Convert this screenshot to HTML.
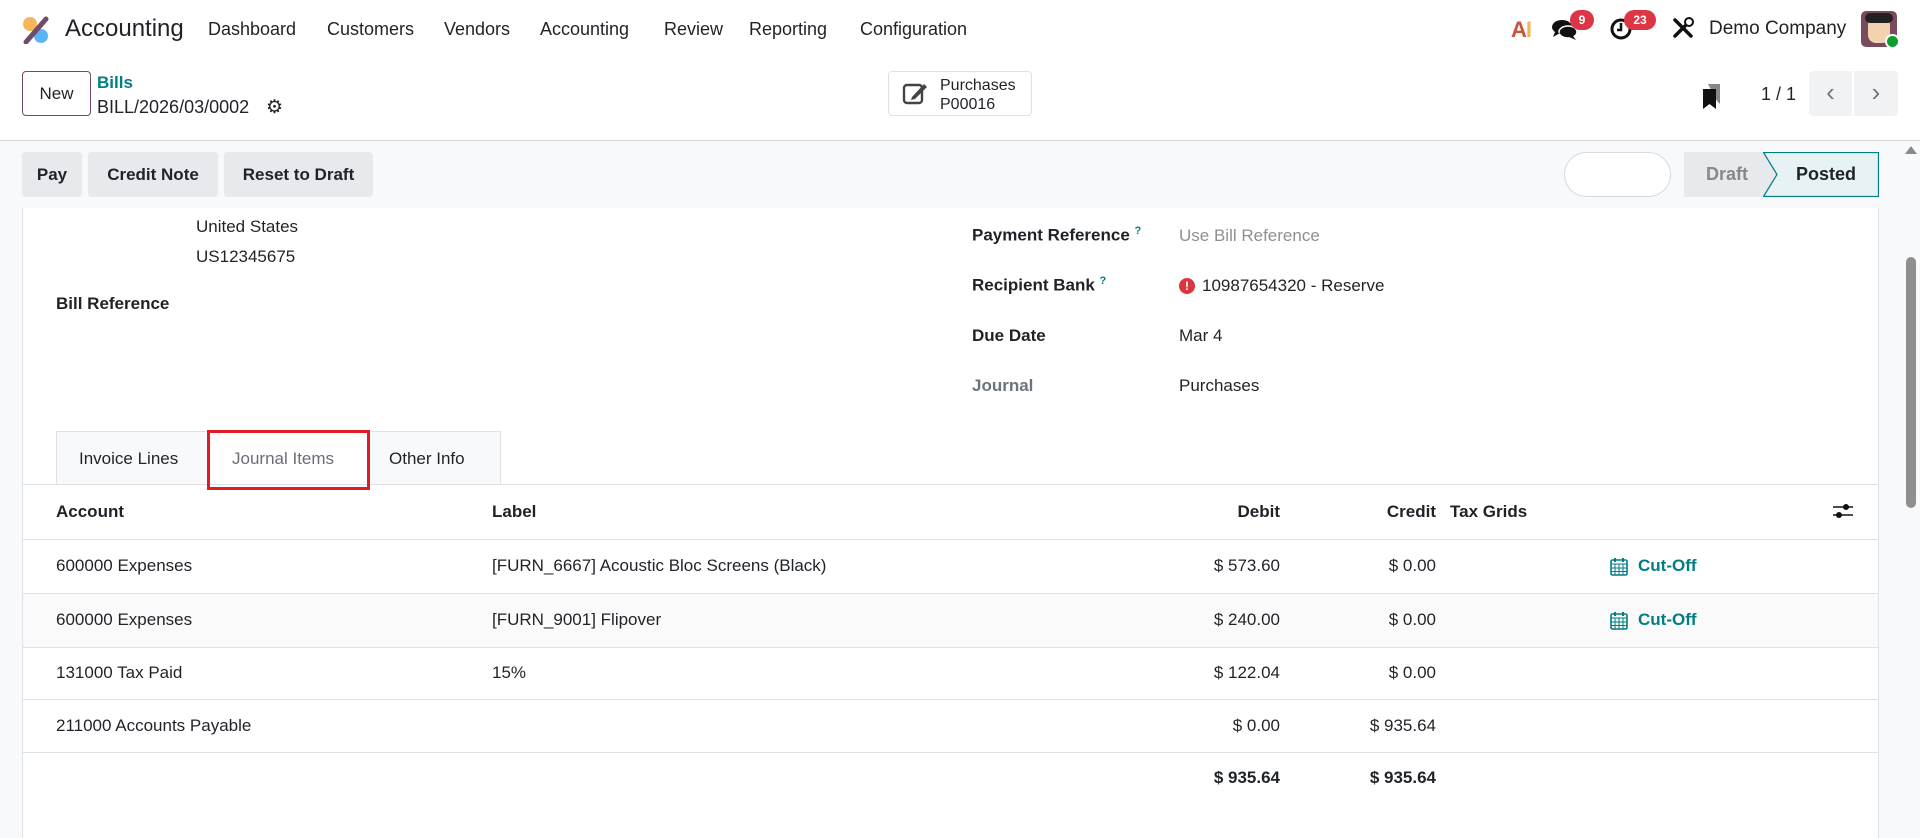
<!DOCTYPE html>
<html><head><meta charset="utf-8">
<style>
*{box-sizing:border-box;margin:0;padding:0}
body{width:1920px;height:838px;overflow:hidden;background:#fff;font-family:"Liberation Sans",sans-serif;font-size:17px;color:#1f2328;position:relative}
.a{position:absolute;white-space:nowrap}
.btn{position:absolute;background:#e7e9ed;border-radius:4px;font-weight:bold;color:#1f2328;display:flex;align-items:center;justify-content:center;font-size:17px}
.b{font-weight:bold}
.hl{position:absolute;left:22px;width:1856px;height:1px;background:#dee2e6}
.r{text-align:right}
.cut{color:#017e84;font-weight:bold}
.badge{position:absolute;background:#dc3545;color:#fff;font-size:12px;font-weight:bold;border-radius:10px;height:20px;line-height:20px;text-align:center}
</style></head><body>
<svg class="a" style="left:22px;top:16px" width="28" height="28" viewBox="0 0 28 28">
<circle cx="8" cy="8" r="7" fill="#f9b55a"/><circle cx="19" cy="20" r="7" fill="#5bb4f5"/>
<line x1="4" y1="26" x2="24" y2="3" stroke="#714b67" stroke-width="5" stroke-linecap="round"/></svg>
<div class="a" style="left:65px;top:15px;font-size:24px;color:#1f2328">Accounting</div>
<div class="a" style="left:208px;top:19px;font-size:18px">Dashboard</div>
<div class="a" style="left:327px;top:19px;font-size:18px">Customers</div>
<div class="a" style="left:444px;top:19px;font-size:18px">Vendors</div>
<div class="a" style="left:540px;top:19px;font-size:18px">Accounting</div>
<div class="a" style="left:664px;top:19px;font-size:18px">Review</div>
<div class="a" style="left:749px;top:19px;font-size:18px">Reporting</div>
<div class="a" style="left:860px;top:19px;font-size:18px">Configuration</div>
<div class="a" style="left:1511px;top:17px;font-size:22px;font-weight:bold;color:#c8553d;letter-spacing:-1px">A<span style="color:#f6b54e">I</span></div>
<svg class="a" style="left:1551px;top:18px" width="28" height="24" viewBox="0 0 28 24"><ellipse cx="11" cy="9" rx="10" ry="7" fill="#111"/><ellipse cx="17" cy="14" rx="9" ry="6" fill="#111" stroke="#fff" stroke-width="1.5"/><path d="M4 14 L2 19 L9 15Z" fill="#111"/><path d="M22 18 L25 22 L18 19Z" fill="#111"/></svg>
<div class="badge" style="left:1570px;top:10px;width:24px">9</div>
<svg class="a" style="left:1609px;top:17px" width="24" height="24" viewBox="0 0 24 24"><circle cx="12" cy="12" r="9" fill="none" stroke="#111" stroke-width="3"/><path d="M12 6v7h-4" fill="none" stroke="#111" stroke-width="2.5"/></svg>
<div class="badge" style="left:1624px;top:10px;width:32px">23</div>
<svg class="a" style="left:1672px;top:17px" width="22" height="22" viewBox="0 0 22 22"><path d="M3 19 L19 3 M3 3 L19 19" stroke="#111" stroke-width="3.5" stroke-linecap="round"/><circle cx="17" cy="5" r="4" fill="#fff" stroke="#111" stroke-width="2"/></svg>
<div class="a" style="left:1709px;top:18px;font-size:19px">Demo Company</div>
<div class="a" style="left:1861px;top:11px;width:36px;height:36px;border-radius:5px;background:#7a4b5c"><div style="position:absolute;left:7px;top:6px;width:22px;height:26px;border-radius:8px;background:#f3d2b0"></div><div style="position:absolute;left:4px;top:2px;width:28px;height:10px;background:#222;border-radius:6px"></div></div>
<div class="a" style="left:1885px;top:34px;width:15px;height:15px;border-radius:50%;background:#0c9d2c;border:2px solid #fff"></div>
<div class="a" style="left:22px;top:71px;width:69px;height:45px;border:1px solid #714b67;border-radius:4px;font-size:17px;line-height:43px;text-align:center;background:#fff">New</div>
<div class="a" style="left:97px;top:73px;color:#017e84;font-weight:bold;font-size:17px">Bills</div>
<div class="a" style="left:97px;top:97px;font-size:18px">BILL/2026/03/0002</div>
<div class="a" style="left:266px;top:96px;font-size:19px">⚙</div>
<div class="a" style="left:888px;top:71px;width:144px;height:45px;border:1px solid #dee2e6;border-radius:4px;background:#fff"></div>
<svg class="a" style="left:902px;top:80px" width="26" height="26" viewBox="0 0 26 26"><rect x="2" y="5" width="18" height="18" rx="3" fill="none" stroke="#444" stroke-width="2.4"/><path d="M10 17 L22 4 L25 7 L13 19 L9 20Z" fill="#444"/></svg>
<div class="a" style="left:940px;top:76px;font-size:16px;line-height:19px">Purchases<br>P00016</div>
<svg class="a" style="left:1702px;top:82px" width="20" height="28" viewBox="0 0 20 28"><path d="M6 2h12v20l-3-3" fill="#888"/><path d="M1 7h13v20l-6.5-5L1 27Z" fill="#111"/></svg>
<div class="a" style="left:1761px;top:84px;font-size:18px">1 / 1</div>
<div class="a" style="left:1809px;top:71px;width:43px;height:45px;background:#f1f2f4;border-radius:4px 0 0 4px;color:#777;font-size:26px;text-align:center;line-height:42px">‹</div>
<div class="a" style="left:1854px;top:71px;width:44px;height:45px;background:#f1f2f4;border-radius:0 4px 4px 0;color:#777;font-size:26px;text-align:center;line-height:42px">›</div>
<div class="a" style="left:0;top:140px;width:1920px;height:1px;background:#d8dadd"></div>
<div class="a" style="left:0;top:141px;width:1902px;height:697px;background:#f8f9fa"></div>
<div class="btn" style="left:22px;top:152px;width:60px;height:45px">Pay</div>
<div class="btn" style="left:88px;top:152px;width:130px;height:45px">Credit Note</div>
<div class="btn" style="left:224px;top:152px;width:149px;height:45px">Reset to Draft</div>
<div class="a" style="left:1564px;top:152px;width:107px;height:45px;border:1px solid #d8dadd;border-radius:23px;background:#fff"></div>
<div class="a" style="left:1684px;top:152px;width:100px;height:45px;background:#e7e9ed;color:#888;font-weight:bold;font-size:18px;line-height:45px;padding-left:22px">Draft</div>
<svg class="a" style="left:1763px;top:152px" width="116" height="45" viewBox="0 0 116 45"><path d="M0.5 0.5 H115.5 V44.5 H0.5 L14 22.5 Z" fill="#e6f2f3" stroke="#017e84" stroke-width="1.2"/></svg>
<div class="a b" style="left:1796px;top:164px;font-size:18px">Posted</div>
<div class="a" style="left:1902px;top:141px;width:18px;height:697px;background:#f8f9fa"></div>
<div class="a" style="left:1905px;top:146px;width:0;height:0;border-left:6px solid transparent;border-right:6px solid transparent;border-bottom:8px solid #8a8a8a"></div>
<div class="a" style="left:1906px;top:257px;width:10px;height:251px;background:#8f8f8f;border-radius:5px"></div>
<div class="a" style="left:22px;top:208px;width:1857px;height:630px;background:#fff;border-left:1px solid #dee2e6;border-right:1px solid #dee2e6"></div>
<div class="a" style="left:196px;top:217px">United States</div>
<div class="a" style="left:196px;top:247px">US12345675</div>
<div class="a b" style="left:56px;top:294px">Bill Reference</div>
<div class="a b" style="left:972px;top:225px">Payment Reference <sup style="color:#017e84;font-size:11px">?</sup></div>
<div class="a" style="left:1179px;top:226px;color:#8f8f8f">Use Bill Reference</div>
<div class="a b" style="left:972px;top:275px">Recipient Bank <sup style="color:#017e84;font-size:11px">?</sup></div>
<div class="a" style="left:1179px;top:278px;width:16px;height:16px;border-radius:50%;background:#d9363e;color:#fff;font-size:12px;font-weight:bold;text-align:center;line-height:16px">!</div>
<div class="a" style="left:1202px;top:276px">10987654320 - Reserve</div>
<div class="a b" style="left:972px;top:326px">Due Date</div>
<div class="a" style="left:1179px;top:326px">Mar 4</div>
<div class="a b" style="left:972px;top:376px;color:#6c757d">Journal</div>
<div class="a" style="left:1179px;top:376px">Purchases</div>
<div class="a" style="left:56px;top:431px;width:445px;height:53px;border:1px solid #dee2e6;border-bottom:none;background:#f8f9fa"></div>
<div class="a" style="left:210px;top:431px;width:158px;height:54px;background:#fff"></div>
<div class="hl" style="top:484px"></div>
<div class="a" style="left:210px;top:485px;width:158px;height:2px;background:#fff"></div>
<div class="a" style="left:79px;top:449px">Invoice Lines</div>
<div class="a" style="left:232px;top:449px;color:#6c6c77">Journal Items</div>
<div class="a" style="left:389px;top:449px">Other Info</div>
<div class="a" style="left:207px;top:430px;width:163px;height:60px;border:3px solid #e01b24"></div>
<div class="a b" style="left:56px;top:502px">Account</div>
<div class="a b" style="left:492px;top:502px">Label</div>
<div class="a b r" style="left:1180px;width:100px;top:502px">Debit</div>
<div class="a b r" style="left:1336px;width:100px;top:502px">Credit</div>
<div class="a b" style="left:1450px;top:502px">Tax Grids</div>
<svg class="a" style="left:1832px;top:502px" width="22" height="18" viewBox="0 0 22 18"><path d="M1 5h20M1 13h20" stroke="#111" stroke-width="1.5"/><circle cx="14" cy="5" r="3" fill="#111"/><circle cx="7" cy="13" r="3" fill="#111"/></svg>
<div class="hl" style="top:539px"></div>
<div class="a" style="left:23px;top:594px;width:1855px;height:53px;background:#fafafa"></div>
<div class="hl" style="top:593px"></div>
<div class="hl" style="top:647px"></div>
<div class="hl" style="top:699px"></div>
<div class="hl" style="top:752px"></div>
<div class="a" style="left:56px;top:556px">600000 Expenses</div>
<div class="a" style="left:492px;top:556px">[FURN_6667] Acoustic Bloc Screens (Black)</div>
<div class="a r" style="left:1180px;width:100px;top:556px">$ 573.60</div>
<div class="a r" style="left:1336px;width:100px;top:556px">$ 0.00</div>
<svg class="a" style="left:1610px;top:557px" width="18" height="19" viewBox="0 0 18 19"><rect x="1" y="3" width="16" height="15" rx="1.5" fill="none" stroke="#017e84" stroke-width="1.6"/><path d="M1 7h16M5 7v11M9 7v11M13 7v11M1 11h16M1 14.5h16" stroke="#017e84" stroke-width="1"/><path d="M5 1v4M13 1v4" stroke="#017e84" stroke-width="2"/></svg>
<div class="a cut" style="left:1638px;top:556px">Cut-Off</div>
<div class="a" style="left:56px;top:610px">600000 Expenses</div>
<div class="a" style="left:492px;top:610px">[FURN_9001] Flipover</div>
<div class="a r" style="left:1180px;width:100px;top:610px">$ 240.00</div>
<div class="a r" style="left:1336px;width:100px;top:610px">$ 0.00</div>
<svg class="a" style="left:1610px;top:611px" width="18" height="19" viewBox="0 0 18 19"><rect x="1" y="3" width="16" height="15" rx="1.5" fill="none" stroke="#017e84" stroke-width="1.6"/><path d="M1 7h16M5 7v11M9 7v11M13 7v11M1 11h16M1 14.5h16" stroke="#017e84" stroke-width="1"/><path d="M5 1v4M13 1v4" stroke="#017e84" stroke-width="2"/></svg>
<div class="a cut" style="left:1638px;top:610px">Cut-Off</div>
<div class="a" style="left:56px;top:663px">131000 Tax Paid</div>
<div class="a" style="left:492px;top:663px">15%</div>
<div class="a r" style="left:1180px;width:100px;top:663px">$ 122.04</div>
<div class="a r" style="left:1336px;width:100px;top:663px">$ 0.00</div>
<div class="a" style="left:56px;top:716px">211000 Accounts Payable</div>
<div class="a r" style="left:1180px;width:100px;top:716px">$ 0.00</div>
<div class="a r" style="left:1336px;width:100px;top:716px">$ 935.64</div>
<div class="a b r" style="left:1180px;width:100px;top:768px">$ 935.64</div>
<div class="a b r" style="left:1336px;width:100px;top:768px">$ 935.64</div>
</body></html>
